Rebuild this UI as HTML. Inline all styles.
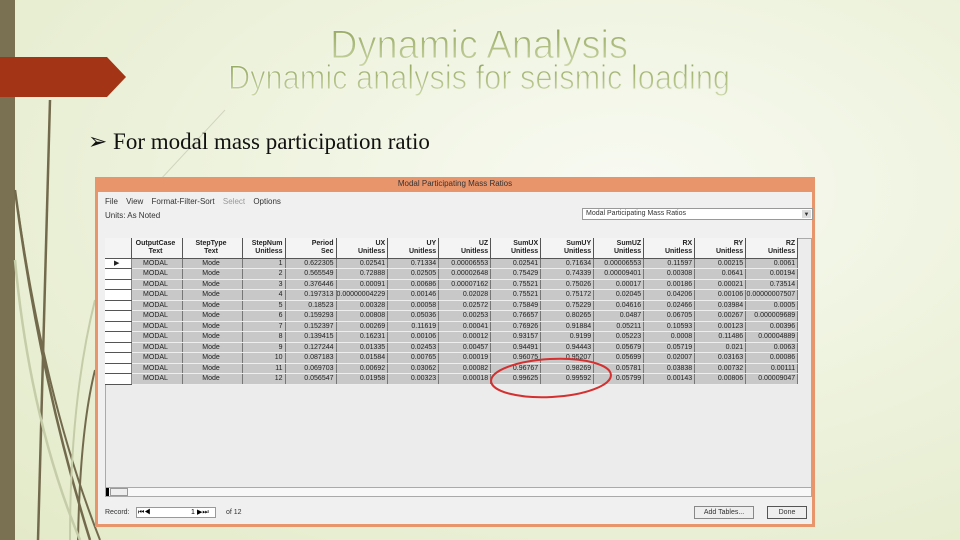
<!DOCTYPE html>
<html><head><meta charset="utf-8"><style>
*{margin:0;padding:0;box-sizing:border-box}
body{width:960px;height:540px;overflow:hidden;position:relative;background:radial-gradient(ellipse at 65% 35%,#f8faf2 0%,#eef3de 45%,#e3eac8 100%);font-family:"Liberation Sans",sans-serif}
.abs{position:absolute}
#win{left:95px;top:177px;width:720px;height:350px;background:#e8956c;}
#inner{left:3px;top:15px;width:714px;height:332px;background:#f0f0f0}
.tt{font-size:8px;color:#333}
table{border-collapse:collapse;table-layout:fixed;font-size:7px;color:#222}
td{height:10.5px;border-right:1px solid #777;border-bottom:1px solid #eee;text-align:right;padding-right:2px;background:#c8c8c8;white-space:nowrap;overflow:hidden;line-height:9px}
td.c{text-align:center}
td.h{background:#fff;border-right:1px solid #888;border-bottom:1px solid #555}
th{height:20px;background:#f4f4f4;border-right:1px solid #555;border-bottom:1px solid #555;font-weight:bold;text-align:right;padding-right:2px;line-height:8px;font-size:7px}
th.c{text-align:center}
</style></head><body>
<div class="abs" style="left:0;top:0;width:15px;height:540px;background:#7a7152"></div>
<svg class="abs" style="left:0;top:0" width="960" height="540">
<path d="M50 100 L38 540" stroke="#736a4d" stroke-width="2.5" fill="none"/>
<path d="M15 190 Q40 380 90 540" stroke="#736a4d" stroke-width="2.5" fill="none"/>
<path d="M18 210 Q45 400 100 540" stroke="#736a4d" stroke-width="2" fill="none"/>
<path d="M95 370 Q80 430 78 540" stroke="#736a4d" stroke-width="2" fill="none"/>
<path d="M15 260 Q30 420 80 540" stroke="#c5cca8" stroke-width="2.5" fill="none"/>
<path d="M95 300 Q70 400 70 540" stroke="#c5cca8" stroke-width="2" fill="none"/>
<path d="M225 110 L160 180" stroke="#d0d6bc" stroke-width="1" fill="none"/>
<polygon points="0,57 107,57 126,77 107,97 0,97" fill="#a33516"/>
<defs><linearGradient id="g" x1="0" y1="0" x2="0" y2="1"><stop offset="0" stop-color="#8ea256"/><stop offset="1" stop-color="#cdd7a8"/></linearGradient></defs>
<g stroke="#f1f5e6" stroke-width="1.1">
<text x="330" y="58" font-family="Liberation Sans" font-size="40" fill="url(#g)" textLength="298" lengthAdjust="spacingAndGlyphs">Dynamic Analysis</text>
<text x="228" y="89" font-family="Liberation Sans" font-size="34" fill="url(#g)" textLength="502" lengthAdjust="spacingAndGlyphs">Dynamic analysis  for  seismic loading</text>
</g>
</svg>
<div class="abs" style="left:88px;top:129px;font-family:'Liberation Serif',serif;font-size:23px;color:#111">&#x27A2; For modal mass participation ratio</div>
<div id="win" class="abs">
<div class="abs tt" style="left:0;top:2px;width:720px;text-align:center;color:#333">Modal Participating Mass Ratios</div>
<div id="inner" class="abs">
<div class="abs tt" style="left:7px;top:5px;word-spacing:6px">File View Format-Filter-Sort <span style="color:#999">Select</span> Options</div>
<div class="abs tt" style="left:7px;top:19px">Units: As Noted</div>
<div class="abs tt" style="left:484px;top:16px;width:231px;height:12px;background:#fff;border:1px solid #999;padding-left:3px;line-height:10px;font-size:7px">Modal Participating Mass Ratios<span style="position:absolute;right:1px;top:1px;width:9px;height:8px;background:#ddd;font-size:6px;text-align:center">▼</span></div>
<div class="abs" style="left:7px;top:46px;width:707px;height:250px;background:#ececec;border:1px solid #aaa"></div>
<table class="abs" style="left:7px;top:46px">
<colgroup><col style="width:26px"><col style="width:51px"><col style="width:60px"><col style="width:43px"><col style="width:51px"><col style="width:51px"><col style="width:51px"><col style="width:52px"><col style="width:50px"><col style="width:53px"><col style="width:50px"><col style="width:51px"><col style="width:51px"><col style="width:52px"></colgroup>
<tr><th style="background:#f4f4f4"></th><th class="c">OutputCase<br>Text</th><th class="c">StepType<br>Text</th><th>StepNum<br>Unitless</th><th>Period<br>Sec</th><th>UX<br>Unitless</th><th>UY<br>Unitless</th><th>UZ<br>Unitless</th><th>SumUX<br>Unitless</th><th>SumUY<br>Unitless</th><th>SumUZ<br>Unitless</th><th>RX<br>Unitless</th><th>RY<br>Unitless</th><th>RZ<br>Unitless</th></tr>
<tr><td class="h c">▶</td><td class="c">MODAL</td><td class="c">Mode</td><td>1</td><td>0.622305</td><td>0.02541</td><td>0.71334</td><td>0.00006553</td><td>0.02541</td><td>0.71634</td><td>0.00006553</td><td>0.11597</td><td>0.00215</td><td>0.0061</td></tr>
<tr><td class="h"></td><td class="c">MODAL</td><td class="c">Mode</td><td>2</td><td>0.565549</td><td>0.72888</td><td>0.02505</td><td>0.00002648</td><td>0.75429</td><td>0.74339</td><td>0.00009401</td><td>0.00308</td><td>0.0641</td><td>0.00194</td></tr>
<tr><td class="h"></td><td class="c">MODAL</td><td class="c">Mode</td><td>3</td><td>0.376446</td><td>0.00091</td><td>0.00686</td><td>0.00007162</td><td>0.75521</td><td>0.75026</td><td>0.00017</td><td>0.00186</td><td>0.00021</td><td>0.73514</td></tr>
<tr><td class="h"></td><td class="c">MODAL</td><td class="c">Mode</td><td>4</td><td>0.197313</td><td>0.00000004229</td><td>0.00146</td><td>0.02028</td><td>0.75521</td><td>0.75172</td><td>0.02045</td><td>0.04206</td><td>0.00106</td><td>0.00000007507</td></tr>
<tr><td class="h"></td><td class="c">MODAL</td><td class="c">Mode</td><td>5</td><td>0.18523</td><td>0.00328</td><td>0.00058</td><td>0.02572</td><td>0.75849</td><td>0.75229</td><td>0.04616</td><td>0.02466</td><td>0.03984</td><td>0.0005</td></tr>
<tr><td class="h"></td><td class="c">MODAL</td><td class="c">Mode</td><td>6</td><td>0.159293</td><td>0.00808</td><td>0.05036</td><td>0.00253</td><td>0.76657</td><td>0.80265</td><td>0.0487</td><td>0.06705</td><td>0.00267</td><td>0.000009689</td></tr>
<tr><td class="h"></td><td class="c">MODAL</td><td class="c">Mode</td><td>7</td><td>0.152397</td><td>0.00269</td><td>0.11619</td><td>0.00041</td><td>0.76926</td><td>0.91884</td><td>0.05211</td><td>0.10593</td><td>0.00123</td><td>0.00396</td></tr>
<tr><td class="h"></td><td class="c">MODAL</td><td class="c">Mode</td><td>8</td><td>0.139415</td><td>0.16231</td><td>0.00106</td><td>0.00012</td><td>0.93157</td><td>0.9199</td><td>0.05223</td><td>0.0008</td><td>0.11486</td><td>0.00004889</td></tr>
<tr><td class="h"></td><td class="c">MODAL</td><td class="c">Mode</td><td>9</td><td>0.127244</td><td>0.01335</td><td>0.02453</td><td>0.00457</td><td>0.94491</td><td>0.94443</td><td>0.05679</td><td>0.05719</td><td>0.021</td><td>0.0063</td></tr>
<tr><td class="h"></td><td class="c">MODAL</td><td class="c">Mode</td><td>10</td><td>0.087183</td><td>0.01584</td><td>0.00765</td><td>0.00019</td><td>0.96075</td><td>0.95207</td><td>0.05699</td><td>0.02007</td><td>0.03163</td><td>0.00086</td></tr>
<tr><td class="h"></td><td class="c">MODAL</td><td class="c">Mode</td><td>11</td><td>0.069703</td><td>0.00692</td><td>0.03062</td><td>0.00082</td><td>0.96767</td><td>0.98269</td><td>0.05781</td><td>0.03838</td><td>0.00732</td><td>0.00111</td></tr>
<tr><td class="h"></td><td class="c">MODAL</td><td class="c">Mode</td><td>12</td><td>0.056547</td><td>0.01958</td><td>0.00323</td><td>0.00018</td><td>0.99625</td><td>0.99592</td><td>0.05799</td><td>0.00143</td><td>0.00806</td><td>0.00009047</td></tr>
</table>
<div class="abs" style="left:7px;top:295px;width:707px;height:10px;background:#f8f8f8;border:1px solid #aaa"><div style="position:absolute;left:0;top:0;width:3px;height:8px;background:#000"></div><div style="position:absolute;left:4px;top:0;width:18px;height:8px;border:1px solid #999;background:#eee"></div></div>
<div class="abs tt" style="left:7px;top:317px;font-size:7px">Record:</div>
<div class="abs" style="left:38px;top:315px;width:80px;height:11px;background:#fff;border:1px solid #999;font-size:7px;line-height:9px"><span style="position:absolute;left:1px">⏮◀</span><span style="position:absolute;left:54px">1</span><span style="position:absolute;left:60px">▶⏭</span></div>
<div class="abs tt" style="left:128px;top:317px;font-size:7px">of 12</div>
<div class="abs tt" style="left:596px;top:314px;width:60px;height:13px;border:1px solid #888;background:#eee;font-size:7px;text-align:center;line-height:11px">Add Tables...</div>
<div class="abs tt" style="left:669px;top:314px;width:40px;height:13px;border:1px solid #555;background:#eee;font-size:7px;text-align:center;line-height:11px">Done</div>
</div></div>
<svg class="abs" style="left:0;top:0" width="960" height="540"><ellipse cx="551" cy="378" rx="60" ry="19" fill="none" stroke="#d43030" stroke-width="2" transform="rotate(-3 551 378)"/></svg>
</body></html>
